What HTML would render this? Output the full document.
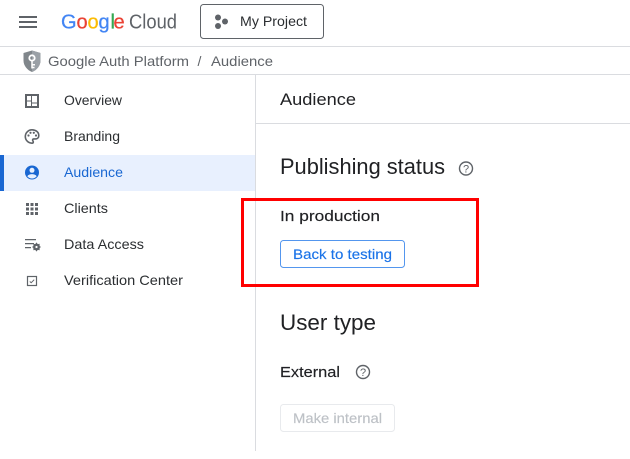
<!DOCTYPE html>
<html><head><meta charset="utf-8"><style>
html,body{margin:0;padding:0;background:#fff;width:630px;height:459px;overflow:hidden}
svg{display:block}
text{font-family:"Liberation Sans",Arial,sans-serif;font-size:14px;fill:#202124}
.n{fill:#2b2e31}.g{fill:#5f6368}
.m{stroke-width:.15}
</style></head><body>
<svg width="630" height="459" viewBox="0 0 630 459" xmlns="http://www.w3.org/2000/svg">
<rect width="630" height="459" fill="#fff"/>
<!-- lines -->
<rect x="0" y="46" width="630" height="1" fill="#dadce0"/>
<rect x="0" y="74" width="630" height="1" fill="#dadce0"/>
<rect x="255" y="75" width="1" height="376" fill="#dadce0"/>
<rect x="256" y="123" width="374" height="1" fill="#dadce0"/>
<!-- hamburger -->
<path d="M19 16h18v2H19zM19 21h18v2H19zM19 26h18v2H19z" fill="#5f6368"/>
<!-- logo -->
<text y="28.500" style="font-size:20px;stroke-width:.25"><tspan x="61" fill="#4285f4" stroke="#4285f4">G</tspan><tspan x="76.500" fill="#ea4335" stroke="#ea4335">o</tspan><tspan x="87.500" fill="#fbbc04" stroke="#fbbc04">o</tspan><tspan x="98.500" fill="#4285f4" stroke="#4285f4">g</tspan><tspan x="110.500" fill="#34a853" stroke="#34a853">l</tspan><tspan x="113.500" fill="#ea4335" stroke="#ea4335">e</tspan></text>
<text x="129" y="28.500" textLength="48" lengthAdjust="spacingAndGlyphs" style="font-size:20.500px;fill:#5f6368">Cloud</text>
<!-- project -->
<rect x="200.500" y="4.500" width="123" height="34" rx="3" fill="#fff" stroke="#5f6368"/>
<circle cx="218" cy="17.500" r="3" fill="#5f6368"/><circle cx="225" cy="21.500" r="3" fill="#5f6368"/><circle cx="218" cy="26" r="3" fill="#5f6368"/>
<text x="240" y="26" textLength="67" lengthAdjust="spacingAndGlyphs" class="n">My Project</text>
<!-- breadcrumb -->
<path d="M32 50.500l8.500 2.500v7.500c0 5-3.500 9.500-8.500 11.500c-5-2-8.500-6.500-8.500-11.500V53z" fill="#80868b"/>
<path d="M32 50.500l8.500 2.500v7.500c0 5-3.500 9.500-8.500 11.500z" fill="#9aa0a6"/>
<circle cx="32" cy="58" r="2.700" fill="none" stroke="#fff" stroke-width="1.800"/>
<path d="M32 60.500v8M32 64.800h3M32 67.500h2.500" stroke="#fff" stroke-width="1.500" fill="none"/>
<text x="48" y="66" textLength="141" lengthAdjust="spacingAndGlyphs" class="g">Google Auth Platform</text>
<text x="197.500" y="66" class="g">/</text>
<text x="211" y="66" textLength="62" lengthAdjust="spacingAndGlyphs" class="g">Audience</text>
<!-- sidebar -->
<rect x="0" y="155" width="255" height="36" fill="#e8f0fe"/>
<rect x="0" y="155" width="4" height="36" fill="#1967d2"/>
<!-- overview icon -->
<path fill-rule="evenodd" d="M25 94h14v14H25zM27 96v4.500h4v-4.500zM32 96v6.500h5V96zM27 101.500V106h4v-4.500zM32 103.500V106h5v-2.500z" fill="#5f6368"/>
<!-- palette icon -->
<path d="M32 129.800a6.700 6.700 0 0 0 0 13.400c.9 0 1.300-.6 1.300-1.200 0-.9-.7-1.100-.7-1.900 0-.7.600-1.200 1.300-1.200h1.500c2 0 3.400-1.300 3.400-3.300 0-3.500-3-5.800-6.800-5.800z" fill="none" stroke="#5f6368" stroke-width="1.600"/>
<circle cx="28.500" cy="135.500" r="1.100" fill="#5f6368"/><circle cx="30.500" cy="132.800" r="1.100" fill="#5f6368"/><circle cx="33.800" cy="132.800" r="1.100" fill="#5f6368"/><circle cx="36" cy="135.500" r="1.100" fill="#5f6368"/>
<!-- audience icon -->
<circle cx="32" cy="172.500" r="7" fill="#1967d2"/>
<circle cx="32" cy="170.300" r="2.500" fill="#e8f0fe"/>
<path d="M27.300 176.200c1-1.400 2.900-2.100 4.700-2.100s3.700.7 4.700 2.100c-1 1.300-2.800 2.300-4.700 2.300s-3.700-1-4.700-2.300z" fill="#e8f0fe"/>
<!-- clients -->
<path d="M26 203h3v3h-3zM30.500 203h3v3h-3zM35 203h3v3h-3zM26 207.500h3v3h-3zM30.500 207.500h3v3h-3zM35 207.500h3v3h-3zM26 212h3v3h-3zM30.500 212h3v3h-3zM35 212h3v3h-3z" fill="#5f6368"/>
<!-- data access -->
<path d="M25 239h11v1.300H25zM25 243h9v1.300H25zM25 247h6v1.300h-6z" fill="#5f6368"/>
<circle cx="36.500" cy="247" r="2.500" fill="none" stroke="#5f6368" stroke-width="2"/>
<path d="M36.500 242.800v8.400M32.300 247h8.400M33.500 244l6 6M39.500 244l-6 6" stroke="#5f6368" stroke-width="1"/>
<circle cx="36.500" cy="247" r="1.100" fill="#fff"/>
<!-- verification -->
<rect x="27.500" y="276.500" width="9" height="9" fill="none" stroke="#5f6368" stroke-width="1.200"/>
<path d="M29.800 281.500l1.400 1.200 3-3" fill="none" stroke="#5f6368"/>
<text x="64" y="105" textLength="58" lengthAdjust="spacingAndGlyphs" class="n">Overview</text>
<text x="64" y="141" textLength="56" lengthAdjust="spacingAndGlyphs" class="n">Branding</text>
<text x="64" y="177" textLength="59" lengthAdjust="spacingAndGlyphs" style="fill:#1967d2">Audience</text>
<text x="64" y="213" textLength="44" lengthAdjust="spacingAndGlyphs" class="n">Clients</text>
<text x="64" y="249" textLength="80" lengthAdjust="spacingAndGlyphs" class="n">Data Access</text>
<text x="64" y="285" textLength="119" lengthAdjust="spacingAndGlyphs" class="n">Verification Center</text>
<!-- main -->
<text x="280" y="105" textLength="76" lengthAdjust="spacingAndGlyphs" style="font-size:17px">Audience</text>
<text x="280" y="174" textLength="165" lengthAdjust="spacingAndGlyphs" style="font-size:22px">Publishing status</text>
<circle cx="466" cy="168.500" r="6.500" fill="none" stroke="#5f6368" stroke-width="1.400"/>
<text x="466" y="172.500" text-anchor="middle" style="font-size:11px;fill:#5f6368">?</text>
<text x="280" y="221" textLength="100" lengthAdjust="spacingAndGlyphs" class="m" style="font-size:15px;stroke:#202124">In production</text>
<rect x="280.500" y="240.500" width="124" height="27" rx="3" fill="#fff" stroke="#1a73e8" stroke-opacity=".75"/>
<text x="293" y="259" textLength="99" lengthAdjust="spacingAndGlyphs" class="m" style="fill:#1a73e8;stroke:#1a73e8">Back to testing</text>
<rect x="242.500" y="199.500" width="235" height="86" fill="none" stroke="#f00" stroke-width="3"/>
<text x="280" y="330" textLength="96" lengthAdjust="spacingAndGlyphs" style="font-size:22px">User type</text>
<text x="280" y="377" textLength="60" lengthAdjust="spacingAndGlyphs" class="m" style="font-size:15px;stroke:#202124">External</text>
<circle cx="363" cy="372" r="6.500" fill="none" stroke="#5f6368" stroke-width="1.400"/>
<text x="363" y="376" text-anchor="middle" style="font-size:11px;fill:#5f6368">?</text>
<rect x="280.500" y="404.500" width="114" height="27" rx="3" fill="#fff" stroke="#e8eaed"/>
<text x="293" y="423" textLength="89" lengthAdjust="spacingAndGlyphs" class="m" style="fill:#bdc1c6;stroke:#bdc1c6">Make internal</text>
</svg>
</body></html>
